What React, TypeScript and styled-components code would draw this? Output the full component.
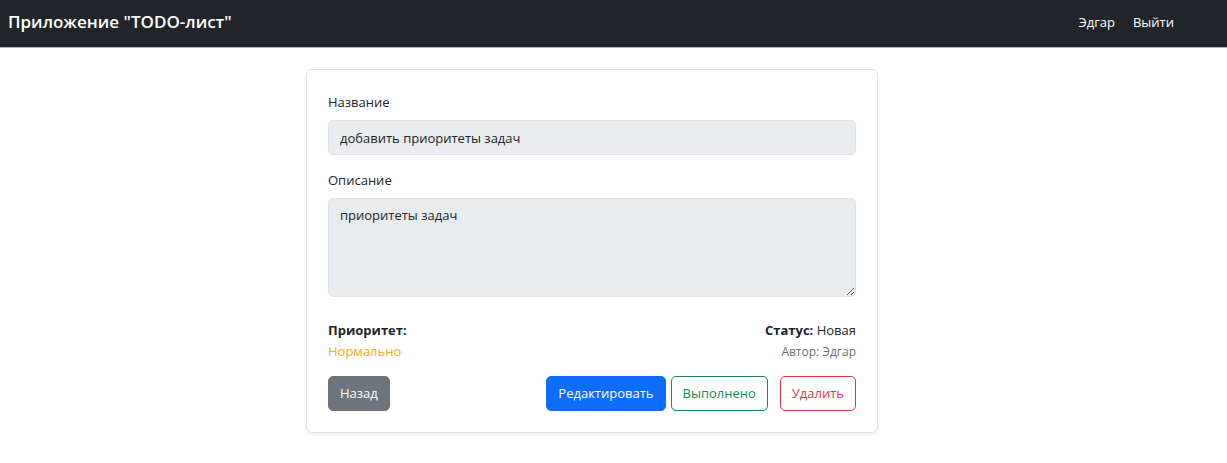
import React from "react";
import styled, { createGlobalStyle } from "styled-components";

const GlobalStyle = createGlobalStyle`
  *, *::before, *::after { box-sizing: border-box; }
  body {
    margin: 0;
    background: #fff;
    color: #212529;
    font-family: "Segoe UI", "Open Sans", "Noto Sans", sans-serif;
    font-size: 13px;
    line-height: 21px;
  }
`;

const Navbar = styled.header`
  display: flex;
  align-items: center;
  justify-content: space-between;
  padding: 9px 53px 12px 8px;
  background: #212529;
  border-bottom: 1px solid #b5b7b9;
`;

const Brand = styled.a`
  color: #fff;
  font-size: 17px;
  font-weight: 600;
  line-height: 26px;
  text-decoration: none;
`;

const NavLinks = styled.nav`
  display: flex;
  gap: 18px;
`;

const NavLink = styled.a`
  color: #fff;
  text-decoration: none;
`;

const Main = styled.main`
  padding: 21px 43px 21px 0;
`;

const Card = styled.form`
  width: 100%;
  max-width: 572px;
  margin: 0 auto;
  padding: 22px 21px 21px;
  border: 1px solid #dee2e6;
  border-radius: 6px;
  background: #fff;
  box-shadow: 0 2px 4px rgba(0, 0, 0, 0.075);
`;

const Field = styled.div`
  display: flex;
  flex-direction: column;
  gap: 7px;
  margin-bottom: 15px;
`;

const Label = styled.label`
  align-self: flex-start;
`;

const controlStyle = `
  display: block;
  width: 100%;
  margin: 0;
  padding: 6px 11px;
  border: 1px solid #dee2e6;
  border-radius: 5px;
  background: #e9ecef;
  color: #212529;
  opacity: 1;
  font: inherit;
`;

const TextInput = styled.input`
  ${controlStyle}
  height: 35px;
`;

const TextArea = styled.textarea`
  ${controlStyle}
  height: 99px;
  resize: vertical;
`;

const Summary = styled.div`
  display: flex;
  justify-content: space-between;
  margin: 23px 0 14px;
`;

const Column = styled.div<{ $end?: boolean }>`
  display: flex;
  flex-direction: column;
  text-align: ${({ $end }) => ($end ? "right" : "left")};
`;

const Priority = styled.span`
  color: #ffa520;
`;

const Author = styled.small`
  color: #6c7075;
  font-size: 12px;
`;

const Actions = styled.div`
  display: flex;
  justify-content: space-between;
`;

const ActionGroup = styled.div`
  display: flex;
  gap: 5px;
`;

const Button = styled.button<{ $color: string; $outline?: boolean; $spaced?: boolean }>`
  margin: 0 0 0 ${({ $spaced }) => ($spaced ? "7px" : "0")};
  padding: 6px 11px;
  border: 1px solid ${({ $color }) => $color};
  border-radius: 5px;
  background: ${({ $color, $outline }) => ($outline ? "transparent" : $color)};
  color: ${({ $color, $outline }) => ($outline ? $color : "#fff")};
  font: inherit;
  white-space: nowrap;
  cursor: pointer;
`;

export default function App() {
  return (
    <>
      <GlobalStyle />
      <Navbar>
        <Brand href="#">Приложение "TODO-лист"</Brand>
        <NavLinks>
          <NavLink href="#profile">Эдгар</NavLink>
          <NavLink href="#logout">Выйти</NavLink>
        </NavLinks>
      </Navbar>
      <Main>
        <Card onSubmit={(event) => event.preventDefault()}>
          <Field>
            <Label htmlFor="title">Название</Label>
            <TextInput id="title" type="text" defaultValue="добавить приоритеты задач" disabled />
          </Field>
          <Field>
            <Label htmlFor="description">Описание</Label>
            <TextArea id="description" defaultValue="приоритеты задач" disabled />
          </Field>
          <Summary>
            <Column>
              <strong>Приоритет:</strong>
              <Priority>Нормально</Priority>
            </Column>
            <Column $end>
              <span>
                <strong>Статус:</strong> Новая
              </span>
              <Author>Автор: Эдгар</Author>
            </Column>
          </Summary>
          <Actions>
            <Button type="button" $color="#6c757d">Назад</Button>
            <ActionGroup>
              <Button type="button" $color="#0d6efd">Редактировать</Button>
              <Button type="button" $color="#198754" $outline>Выполнено</Button>
              <Button type="button" $color="#dc3545" $outline $spaced>Удалить</Button>
            </ActionGroup>
          </Actions>
        </Card>
      </Main>
    </>
  );
}
